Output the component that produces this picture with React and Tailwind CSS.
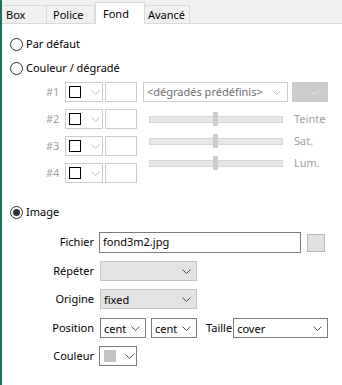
import React from "react";

function Chevron({ color = "#5f5f5f" }) {
  return (
    <svg width="9" height="5" viewBox="0 0 9 5" className="shrink-0">
      <polyline points="0.5,0.5 4.5,4.5 8.5,0.5" fill="none" stroke={color} strokeWidth="1" />
    </svg>
  );
}

function Radio({ checked }) {
  return (
    <span className="flex h-[13px] w-[13px] shrink-0 items-center justify-center rounded-full border border-[#333333] bg-white">
      {checked && <span className="h-[7px] w-[7px] rounded-full bg-[#333333]" />}
    </span>
  );
}

function Tab({ label, w, pl, active }) {
  if (active) {
    return (
      <div
        className="-mb-px flex h-[22px] items-start border-x border-t border-[#d9d9d9] bg-white pt-[3px] text-black"
        style={{ width: w, paddingLeft: pl }}
      >
        {label}
      </div>
    );
  }
  return (
    <div
      className="flex h-[18px] items-center border-r border-t border-[#d9d9d9] bg-[#f0f0f0] pt-[1px] text-black"
      style={{ width: w, paddingLeft: pl }}
    >
      {label}
    </div>
  );
}

function ColorRow({ n }) {
  return (
    <div className="flex h-[20px] items-center">
      <span className="w-[12px] text-right text-[#a0a0a0]">#{n}</span>
      <div className="ml-[7px] flex h-[20px] w-[38px] items-center border border-[#cccccc] bg-white pl-[3px]">
        <span className="h-[12px] w-[12px] border border-black" />
        <span className="ml-[10px]">
          <Chevron color="#c0c0c0" />
        </span>
      </div>
      <div className="ml-[2px] h-[20px] w-[32px] border border-[#cccccc] bg-white" />
    </div>
  );
}

function Slider({ label }) {
  return (
    <div className="flex h-[22px] items-center pl-[6px]">
      <div className="relative h-[7px] w-[134px] border border-[#d6d6d6] bg-[#e7e7e7]">
        <span className="absolute left-[63px] top-[-5px] h-[14px] w-[5px] bg-[#cccccc]" />
      </div>
      <span className="ml-[11px] text-[#a0a0a0]">{label}</span>
    </div>
  );
}

function Select({ w, value, variant = "white", extra = "" }) {
  const styles =
    variant === "gray"
      ? "border-[#c4c4c4] bg-[#e3e3e3]"
      : "border-[#7a7a7a] bg-white";
  return (
    <div
      className={`flex h-[20px] items-center justify-between border pl-[3px] pr-[5px] ${styles} ${extra}`}
      style={{ width: w }}
    >
      <span className="leading-none">{value}</span>
      <Chevron color="#4a4a4a" />
    </div>
  );
}

function FormRow({ label, mt, children }) {
  return (
    <div className={`flex items-center ${mt}`}>
      <span className="w-[84px] text-right">{label}</span>
      {children}
    </div>
  );
}

export default function App() {
  return (
    <div className="flex h-[385px] w-[342px] overflow-hidden bg-white font-['Noto_Sans','Open_Sans',sans-serif] text-[11px] text-black">
      <div className="w-[2px] shrink-0 bg-[#1f6d61]" />
      <div className="flex-1">
        <div className="flex h-[24px] items-end border-b border-[#d9d9d9] bg-[#f0f0f0]">
          <Tab label="Box" w={45} pl={4} />
          <Tab label="Police" w={48} pl={6} />
          <Tab label="Fond" w={50} pl={7} active />
          <Tab label="Avancé" w={45} pl={3} />
        </div>

        <div className="pl-[8px]">
          <div className="mt-[12px] flex h-[16px] items-center gap-[3px]">
            <Radio />
            <span>Par défaut</span>
          </div>
          <div className="mt-[8px] flex h-[16px] items-center gap-[3px]">
            <Radio />
            <span>Couleur / dégradé</span>
          </div>

          <div className="ml-[36px] mt-[6px] flex">
            <div className="flex flex-col gap-[7px]">
              <ColorRow n={1} />
              <ColorRow n={2} />
              <ColorRow n={3} />
              <ColorRow n={4} />
            </div>
            <div className="ml-[6px] flex flex-col">
              <div className="flex h-[20px]">
                <div className="flex h-[20px] w-[145px] items-center justify-between border border-[#cccccc] bg-white pl-[3px] pr-[6px] text-[#6e6e6e]">
                  <span>&lt;dégradés prédéfinis&gt;</span>
                  <Chevron color="#c0c0c0" />
                </div>
                <div className="ml-[4px] flex h-[20px] w-[36px] items-center justify-end border border-[#cccccc] bg-[#cccccc] pr-[8px]">
                  <Chevron color="#e4e4e4" />
                </div>
              </div>
              <div className="mt-[6px]">
                <Slider label="Teinte" />
                <Slider label="Sat." />
                <Slider label="Lum." />
              </div>
            </div>
          </div>

          <div className="mt-[21px] flex h-[16px] items-center gap-[3px]">
            <Radio checked />
            <span>Image</span>
          </div>

          <FormRow label="Fichier" mt="mt-[12px]">
            <div className="ml-[5px] flex h-[21px] w-[202px] items-center border border-[#7a7a7a] bg-white pl-[3px]">
              fond3m2.jpg
            </div>
            <div className="ml-[6px] h-[18px] w-[18px] border border-[#b8b8b8] bg-[#e1e1e1]" />
          </FormRow>

          <FormRow label="Répéter" mt="mt-[8px]">
            <Select w={97} value="" variant="gray" extra="ml-[6px]" />
          </FormRow>

          <FormRow label="Origine" mt="mt-[8px]">
            <Select w={97} value="fixed" variant="gray" extra="ml-[6px]" />
          </FormRow>

          <FormRow label="Position" mt="mt-[9px]">
            <Select w={46} value="cent" extra="ml-[6px]" />
            <Select w={46} value="cent" extra="ml-[5px]" />
            <span className="ml-[9px]">Taille</span>
            <Select w={95} value="cover" extra="ml-[1px]" />
          </FormRow>

          <FormRow label="Couleur" mt="mt-[8px]">
            <div className="ml-[5px] flex h-[20px] w-[38px] items-center border border-[#7a7a7a] bg-white pl-[4px]">
              <span className="h-[12px] w-[12px] bg-[#c3c3c3]" />
              <span className="ml-[9px]">
                <Chevron color="#4a4a4a" />
              </span>
            </div>
          </FormRow>
        </div>
      </div>
    </div>
  );
}
